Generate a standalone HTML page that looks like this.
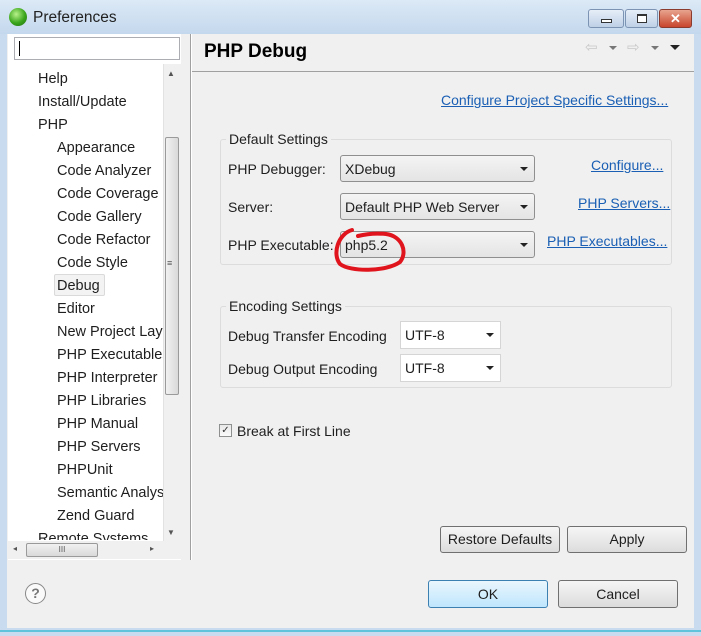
<!DOCTYPE html>
<html><head><style>
*{margin:0;padding:0;box-sizing:border-box}
body{width:701px;height:636px;overflow:hidden;background:#c9dcef;font-family:"Liberation Sans",sans-serif;font-size:14px;color:#1e1e1e;position:relative}
.a{position:absolute}
.t{white-space:nowrap}
.lnk{color:#1a5fb4;text-decoration:underline}
.combo{background:linear-gradient(#f4f4f4,#e4e4e4);border:1px solid #8f8f8f;border-radius:3px}
.arr{position:absolute;right:6px;top:50%;margin-top:-2px;border-left:4px solid transparent;border-right:4px solid transparent;border-top:4px solid #222}
.btn{background:linear-gradient(#f6f6f6,#dcdcdc);border:1px solid #707070;border-radius:3px;text-align:center}
</style></head><body>
<div class="a" style="left:0;top:0;width:701px;height:34px;background:linear-gradient(#dce9f6,#c4d8ed)"></div>
<div class="a" style="left:9px;top:8px;width:18px;height:18px;border-radius:50%;background:radial-gradient(circle at 40% 35%,#b8f28a,#3aa51c 55%,#1f6b0c)"></div>
<div class="a t" style="left:33px;top:9px;font-size:15.5px;color:#222">Preferences</div>
<div class="a" style="left:588px;top:9px;width:36px;height:19px;border:1px solid #7c93b3;border-radius:3px;background:linear-gradient(#e6eef8,#bfd0e6)"><div class="a" style="left:12px;top:9px;width:11px;height:4px;border:1px solid #333;background:#fff"></div></div>
<div class="a" style="left:625px;top:9px;width:33px;height:19px;border:1px solid #7c93b3;border-radius:3px;background:linear-gradient(#e6eef8,#bfd0e6)"><div class="a" style="left:11px;top:4px;width:10px;height:9px;border:1px solid #333;border-top-width:2px;background:#fff"></div></div>
<div class="a" style="left:659px;top:9px;width:33px;height:19px;border:1px solid #8b3a2e;border-radius:3px;background:linear-gradient(#e8a48f,#c8452c);color:#fff;font-weight:bold;text-align:center;font-size:13px;line-height:17px">✕</div>
<div class="a" style="left:7px;top:34px;width:687px;height:594px;background:#f0f0f0"></div>
<div class="a" style="left:0;top:630px;width:701px;height:2px;background:#5fc3dc"></div>
<div class="a" style="left:8px;top:34px;width:173px;height:526px;background:#fff"></div>
<div class="a" style="left:14px;top:37px;width:166px;height:23px;border:1px solid #abadb3;background:#fff"><div class="a" style="left:4px;top:3px;width:1px;height:15px;background:#000"></div></div>
<div class="a" style="left:163px;top:64px;width:18px;height:477px;background:#f0f0f0;border-left:1px solid #e2e2e2"></div>
<div class="a" style="left:165px;top:137px;width:14px;height:258px;background:linear-gradient(90deg,#f1f1f1,#d9d9d9);border:1px solid #9a9a9a;border-radius:2px"></div>
<div class="a t" style="left:167px;top:69px;font-size:8px;color:#555">▲</div>
<div class="a t" style="left:167px;top:528px;font-size:8px;color:#555">▼</div>
<div class="a t" style="left:167px;top:258px;font-size:9px;color:#555">≡</div>
<div class="a" style="left:8px;top:541px;width:173px;height:18px;background:#f0f0f0"></div>
<div class="a" style="left:26px;top:543px;width:72px;height:14px;background:linear-gradient(#f1f1f1,#d9d9d9);border:1px solid #9a9a9a;border-radius:2px;font-size:8px;text-align:center;color:#555;line-height:12px">III</div>
<div class="a t" style="left:13px;top:544px;font-size:8px;color:#555">◂</div>
<div class="a t" style="left:150px;top:544px;font-size:8px;color:#555">▸</div>
<div class="a" style="left:54px;top:274px;width:51px;height:22px;background:#f3f3f3;border:1px solid #dadada;border-radius:2px"></div>
<div class="a" style="left:9px;top:68px;width:154px;height:472px;overflow:hidden;line-height:23px;font-size:14.5px">
<div style="padding-left:29px">Help</div>
<div style="padding-left:29px">Install/Update</div>
<div style="padding-left:29px">PHP</div>
<div style="padding-left:48px">Appearance</div>
<div style="padding-left:48px">Code Analyzer</div>
<div style="padding-left:48px">Code Coverage</div>
<div style="padding-left:48px">Code Gallery</div>
<div style="padding-left:48px">Code Refactor</div>
<div style="padding-left:48px">Code Style</div>
<div style="padding-left:48px">Debug</div>
<div style="padding-left:48px">Editor</div>
<div style="padding-left:48px" class="t">New Project Layout</div>
<div style="padding-left:48px" class="t">PHP Executables</div>
<div style="padding-left:48px">PHP Interpreter</div>
<div style="padding-left:48px">PHP Libraries</div>
<div style="padding-left:48px">PHP Manual</div>
<div style="padding-left:48px">PHP Servers</div>
<div style="padding-left:48px">PHPUnit</div>
<div style="padding-left:48px" class="t">Semantic Analysis</div>
<div style="padding-left:48px">Zend Guard</div>
<div style="padding-left:29px">Remote Systems</div>
</div>
<div class="a" style="left:190px;top:34px;width:1px;height:526px;background:#a0a0a0"></div>
<div class="a" style="left:191px;top:34px;width:1px;height:526px;background:#fff"></div>
<div class="a t" style="left:204px;top:41px;font-size:19px;font-weight:bold;color:#000">PHP Debug</div>
<div class="a t" style="left:585px;top:38px;font-size:15px;color:#c8c8c8">⇦</div>
<div class="a" style="left:609px;top:46px;border-left:4px solid transparent;border-right:4px solid transparent;border-top:4px solid #777"></div>
<div class="a t" style="left:627px;top:38px;font-size:15px;color:#c8c8c8">⇨</div>
<div class="a" style="left:651px;top:46px;border-left:4px solid transparent;border-right:4px solid transparent;border-top:4px solid #777"></div>
<div class="a" style="left:670px;top:45px;border-left:5px solid transparent;border-right:5px solid transparent;border-top:5px solid #222"></div>
<div class="a" style="left:192px;top:71px;width:502px;height:1px;background:#a0a0a0"></div>
<div class="a t lnk" style="left:441px;top:92px">Configure Project Specific Settings...</div>
<div class="a" style="left:220px;top:139px;width:452px;height:126px;border:1px solid #dcdcdc;border-radius:3px"></div>
<div class="a t" style="left:226px;top:131px;background:#f0f0f0;padding:0 3px">Default Settings</div>
<div class="a t" style="left:228px;top:161px">PHP Debugger:</div>
<div class="a combo" style="left:340px;top:155px;width:195px;height:27px"><span class="a t" style="left:4px;top:5px">XDebug</span><i class="arr"></i></div>
<div class="a t lnk" style="left:591px;top:157px">Configure...</div>
<div class="a t" style="left:228px;top:199px">Server:</div>
<div class="a combo" style="left:340px;top:193px;width:195px;height:27px"><span class="a t" style="left:4px;top:5px">Default PHP Web Server</span><i class="arr"></i></div>
<div class="a t lnk" style="left:578px;top:195px">PHP Servers...</div>
<div class="a t" style="left:228px;top:237px">PHP Executable:</div>
<div class="a combo" style="left:340px;top:231px;width:195px;height:27px"><span class="a t" style="left:4px;top:5px">php5.2</span><i class="arr"></i></div>
<div class="a t lnk" style="left:547px;top:233px">PHP Executables...</div>
<svg class="a" style="left:330px;top:222px" width="82" height="54"><path d="M22 8 C8 12 2 32 10 42 C20 50 56 50 70 40 C78 30 72 14 56 12 C46 11 36 12 28 14" fill="none" stroke="#e0141c" stroke-width="4" stroke-linecap="round"/></svg>
<div class="a" style="left:220px;top:306px;width:452px;height:82px;border:1px solid #dcdcdc;border-radius:3px"></div>
<div class="a t" style="left:226px;top:298px;background:#f0f0f0;padding:0 3px">Encoding Settings</div>
<div class="a t" style="left:228px;top:328px">Debug Transfer Encoding</div>
<div class="a" style="left:400px;top:321px;width:101px;height:28px;background:#fff;border:1px solid #d5d5d5"><span class="a t" style="left:4px;top:5px">UTF-8</span><i class="arr"></i></div>
<div class="a t" style="left:228px;top:361px">Debug Output Encoding</div>
<div class="a" style="left:400px;top:354px;width:101px;height:28px;background:#fff;border:1px solid #d5d5d5"><span class="a t" style="left:4px;top:5px">UTF-8</span><i class="arr"></i></div>
<div class="a" style="left:219px;top:424px;width:13px;height:13px;border:1px solid #8e8f8f;background:linear-gradient(#e8e8e8,#fafafa);font-size:10px;line-height:11px;text-align:center;color:#333">✓</div>
<div class="a t" style="left:237px;top:423px">Break at First Line</div>
<div class="a btn" style="left:440px;top:526px;width:120px;height:27px;line-height:25px">Restore Defaults</div>
<div class="a btn" style="left:567px;top:526px;width:120px;height:27px;line-height:25px">Apply</div>
<div class="a" style="left:25px;top:583px;width:21px;height:21px;border-radius:50%;border:1.5px solid #888;background:#fafafa;text-align:center;font-weight:bold;color:#777;font-size:14px;line-height:18px">?</div>
<div class="a btn" style="left:428px;top:580px;width:120px;height:28px;line-height:26px;border-color:#3c7fb1;background:linear-gradient(#eaf6fd,#bee6fd)">OK</div>
<div class="a btn" style="left:558px;top:580px;width:120px;height:28px;line-height:26px">Cancel</div>
</body></html>
